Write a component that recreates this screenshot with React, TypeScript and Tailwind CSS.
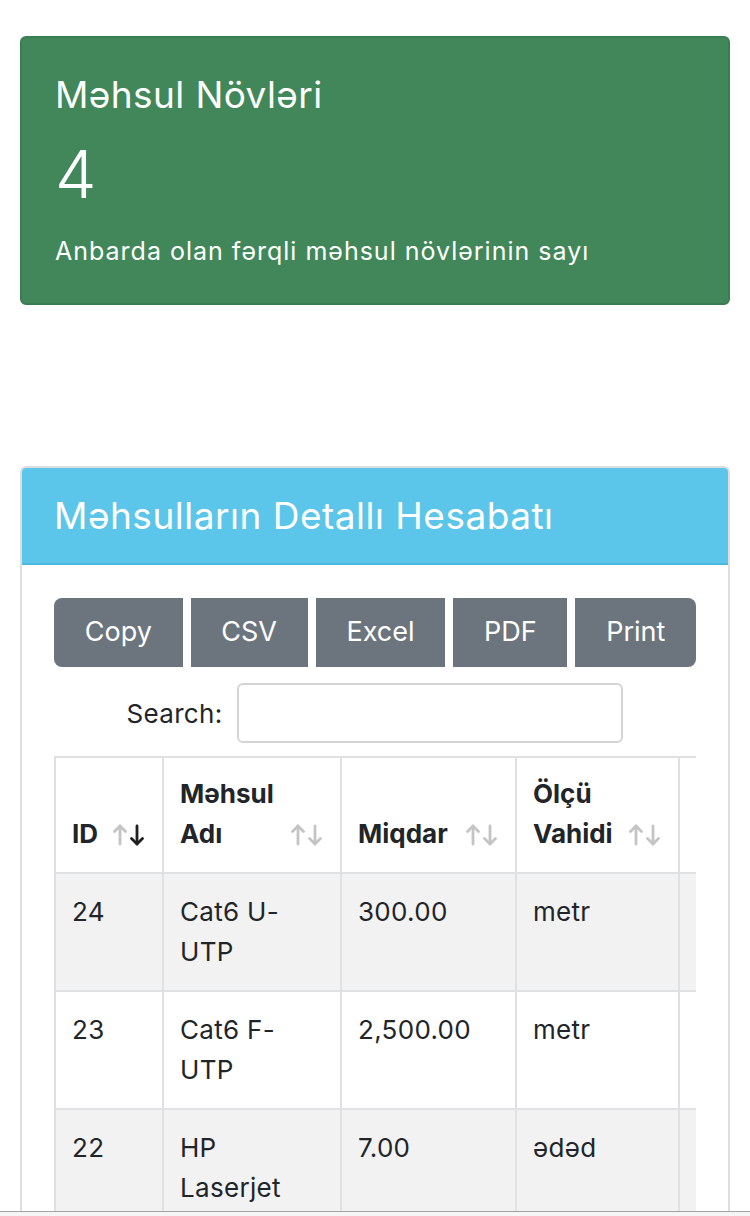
import React from 'react';

const font = { fontFamily: 'Inter, "Noto Sans", sans-serif' };

const rows = [
  { id: '24', name: 'Cat6 U-UTP', qty: '300.00', unit: 'metr' },
  { id: '23', name: 'Cat6 F-UTP', qty: '2,500.00', unit: 'metr' },
  { id: '22', name: 'HP Laserjet', qty: '7.00', unit: 'ədəd' },
];

const buttons = ['Copy', 'CSV', 'Excel', 'PDF', 'Print'];

// up/down sort arrows, "active" darkens the down one
const SortIcon = ({ active }: { active?: boolean }) => (
  <svg width="34" height="22" viewBox="0 0 34 22" fill="none" strokeWidth="2.8" strokeLinecap="round" strokeLinejoin="round">
    <g stroke="#c4c4c4">
      <path d="M7 20V2" />
      <path d="M1.5 7.5L7 2l5.5 5.5" />
    </g>
    <g stroke={active ? '#1f1f1f' : '#c4c4c4'}>
      <path d="M24 2v18" />
      <path d="M18.5 14.5L24 20l5.5-5.5" />
    </g>
  </svg>
);

const headers = [
  { label: 'ID', w: 'w-[108px]', active: true },
  { label: 'Məhsul Adı', w: 'w-[178px]' },
  { label: 'Miqdar', w: 'w-[175px]' },
  { label: 'Ölçü Vahidi', w: 'w-[163px]' },
  { label: '', w: 'w-[160px]' },
];

const cell = 'border-2 border-[#dfe1e3] align-top text-[26px] leading-[40px] tracking-[0.3px] px-[16px] py-[18px]';

export default function App() {
  return (
    <div className="h-[1216px] flex flex-col overflow-hidden bg-white text-[#212529]" style={font}>
      <div className="flex-1 overflow-hidden px-5 pt-[36px]">
        {/* summary card */}
        <div className="bg-[#41875a] border-2 border-[#3b7d52] rounded-md text-white px-[33px] pt-[35px] pb-[34px]">
          <h5 className="text-[37px] leading-[44px] font-normal tracking-[0.4px]">Məhsul Növləri</h5>
          <p className="text-[66px] leading-[80px] font-light mt-[17px]">4</p>
          <p className="text-[25px] leading-[36px] tracking-[1px] mt-[19px]">Anbarda olan fərqli məhsul növlərinin sayı</p>
        </div>

        {/* report card */}
        <div className="mt-[161px] border-2 border-[#dedede] rounded-md overflow-hidden">
          <div className="bg-[#5bc6ea] border-b-2 border-[#4db7dc] px-[32px] pt-[26px] pb-[25px]">
            <h3 className="text-white text-[37px] leading-[44px] font-normal tracking-[0.5px]">Məhsulların Detallı Hesabatı</h3>
          </div>
          <div className="px-[32px] pt-[33px] pb-[40px]">
            <div className="flex gap-2">
              {buttons.map((b, i) => (
                <button
                  key={b}
                  className={`flex-auto h-[69px] bg-[#6c757d] text-white text-[27px] px-[28px] ${i === 0 ? 'rounded-l-lg' : ''} ${i === buttons.length - 1 ? 'rounded-r-lg' : ''}`}
                >
                  {b}
                </button>
              ))}
            </div>

            <div className="flex justify-center items-center gap-[15px] mt-[16px]">
              <label className="text-[26px] tracking-[0.3px]">Search:</label>
              <input className="w-[386px] h-[60px] border-2 border-[#d4d4d4] rounded-md outline-none" />
            </div>

            <div className="mt-[13px] overflow-hidden">
              <table className="table-fixed border-collapse w-[784px]">
                <thead>
                  <tr>
                    {headers.map((h, i) => (
                      <th
                        key={i}
                        className={`${h.w} relative border-2 border-[#dfe1e3] text-left align-bottom text-[26px] leading-[40px] font-bold pl-[16px] pr-[52px] pt-[16px] pb-[18px]`}
                      >
                        {h.label}
                        <span className="absolute right-[15px] bottom-[26px] flex">
                          <SortIcon active={h.active} />
                        </span>
                      </th>
                    ))}
                  </tr>
                </thead>
                <tbody>
                  {rows.map((r, i) => (
                    <tr key={r.id} className={i % 2 === 0 ? 'bg-[#f2f2f2]' : 'bg-white'}>
                      <td className={cell}>{r.id}</td>
                      <td className={cell}>
                        <div className="max-w-[118px]">{r.name}</div>
                      </td>
                      <td className={cell}>{r.qty}</td>
                      <td className={cell}>{r.unit}</td>
                      <td className={cell}>&nbsp;</td>
                    </tr>
                  ))}
                </tbody>
              </table>
            </div>
          </div>
        </div>
      </div>
      <div className="h-[5px] border-t border-[#a3a3a3] bg-[#f5f5f5]" />
    </div>
  );
}
